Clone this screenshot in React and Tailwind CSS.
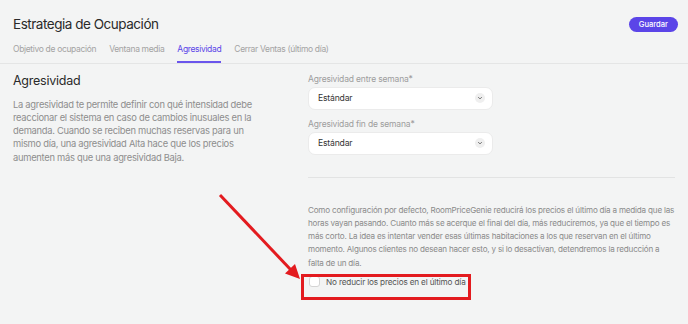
function Chevron() {
  return (
    <span className="flex h-[10px] w-[10px] items-center justify-center rounded-full bg-[#efefef]">
      <svg width="6" height="6" viewBox="0 0 10 10" fill="none" stroke="#666" strokeWidth="1.6" strokeLinecap="round" strokeLinejoin="round">
        <path d="M2.5 4 L5 6.5 L7.5 4" />
      </svg>
    </span>
  );
}

function SelectField({ label, value }) {
  return (
    <div>
      <div className="mb-[2px] text-[8.5px] leading-[12px] tracking-[-0.02em] text-[#9d9d9d]">{label}</div>
      <div className="flex h-[23px] w-[185px] items-center justify-between rounded-[7px] border border-[#ebebeb] bg-white pl-[9px] pr-[7px]">
        <span className="text-[8.6px] tracking-[-0.02em] text-[#333]">{value}</span>
        <Chevron />
      </div>
    </div>
  );
}

export default function App() {
  const tabs = ['Objetivo de ocupación', 'Ventana media', 'Agresividad', 'Cerrar Ventas (último día)'];
  return (
    <div className="relative h-[324px] w-[688px] overflow-hidden bg-[#f3f4f4] font-['Inter',sans-serif]">
      <header className="border-b border-[#e4e5e5] px-[13px]">
        <div className="flex items-center justify-between pt-[15px]">
          <h1 className="text-[13.5px] leading-[18px] tracking-[-0.035em] text-[#2a2a2a]">Estrategia de Ocupación</h1>
          <button className="mr-[-3px] h-[15px] rounded-full bg-[#5b45e8] px-[10px] text-[7.6px] font-medium leading-[15px] text-white">
            Guardar
          </button>
        </div>
        <nav className="mt-[10px] flex gap-[13px]">
          {tabs.map((t) => (
            <div
              key={t}
              className={
                t === 'Agresividad'
                  ? 'border-b-2 border-[#6a55ec] pb-[5px] text-[8.5px] tracking-[-0.04em] text-[#5b45e8]'
                  : 'pb-[5px] text-[8.5px] tracking-[-0.04em] text-[#a3a3a3]'
              }
            >
              {t}
            </div>
          ))}
        </nav>
      </header>

      <main className="flex px-[13px] pt-[9px]">
        <section className="w-[295px] shrink-0">
          <h2 className="text-[12.5px] leading-[16px] tracking-[-0.02em] text-[#2a2a2a]">Agresividad</h2>
          <p className="mt-[9px] w-[250px] text-[9.4px] leading-[13.2px] tracking-[-0.03em] text-[#8e8e8e]">
            La agresividad te permite definir con qué intensidad debe reaccionar el sistema en caso de cambios inusuales en la demanda. Cuando se reciben muchas reservas para un mismo día, una agresividad Alta hace que los precios aumenten más que una agresividad Baja.
          </p>
        </section>

        <section className="min-w-0 flex-1">
          <div className="flex flex-col gap-[8px]">
            <SelectField label="Agresividad entre semana*" value="Estándar" />
            <SelectField label="Agresividad fin de semana*" value="Estándar" />
          </div>
          <div className="mt-[22px] border-t border-[#e2e3e3]" />
          <p className="mt-[26px] whitespace-nowrap text-[8.1px] leading-[13.2px] tracking-[-0.025em] text-[#8a8a8a]">
            Como configuración por defecto, RoomPriceGenie reducirá los precios el último día a medida que las
            <br />
            horas vayan pasando. Cuanto más se acerque el final del día, más reduciremos, ya que el tiempo es
            <br />
            más corto. La idea es intentar vender esas últimas habitaciones a los que reservan en el último
            <br />
            momento. Algunos clientes no desean hacer esto, y si lo desactivan, detendremos la reducción a
            <br />
            falta de un día.
          </p>
          <label className="mt-[6px] ml-[1px] flex items-center gap-[6px]">
            <span className="h-[11px] w-[11px] rounded-[3px] border border-[#d4d4d4] bg-white" />
            <span className="text-[8.2px] tracking-[-0.02em] text-[#555]">No reducir los precios en el último día</span>
          </label>
        </section>
      </main>

      {/* annotation overlay */}
      <div className="absolute left-[301px] top-[274px] h-[26px] w-[170px] border-[3px] border-[#e31b1f]" />
      <svg className="absolute left-0 top-0" width="688" height="324">
        <line x1="220" y1="195" x2="291" y2="270" stroke="#e31b1f" strokeWidth="3" />
        <polygon points="300,279 285,273.5 295,264" fill="#e31b1f" />
      </svg>
    </div>
  );
}
